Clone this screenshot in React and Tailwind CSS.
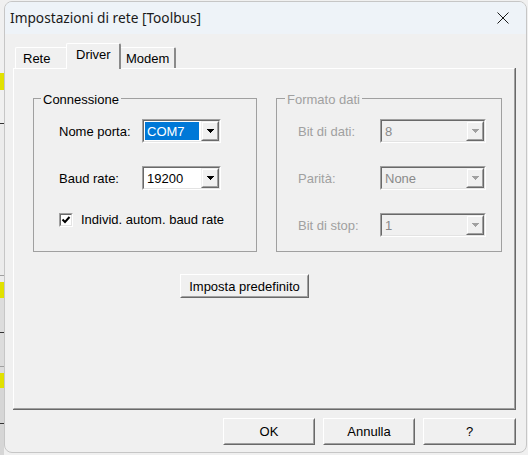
import React from "react";

const Arrow = ({ disabled }) => (
  <svg width="7" height="4" viewBox="0 0 7 4" shapeRendering="crispEdges">
    <polygon points="0,0 7,0 3.5,4" fill={disabled ? "#a0a0a0" : "#000000"} />
  </svg>
);

const DropBtn = ({ disabled }) => (
  <div className="w-[18px] h-full border border-t-[#f0f0f0] border-l-[#f0f0f0] border-r-[#696969] border-b-[#696969]">
    <div className="h-full border border-t-white border-l-white border-r-[#a0a0a0] border-b-[#a0a0a0] bg-[#f0f0f0] flex items-center justify-center">
      <Arrow disabled={disabled} />
    </div>
  </div>
);

const Combo = ({ value, width, selected, disabled }) => (
  <div className={`h-[24px] border border-t-[#a0a0a0] border-l-[#a0a0a0] border-r-white border-b-white ${width}`}>
    <div
      className={`h-full border border-t-[#696969] border-l-[#696969] border-r-[#e3e3e3] border-b-[#e3e3e3] flex ${
        disabled ? "bg-[#f0f0f0]" : "bg-white"
      }`}
    >
      {selected ? (
        <div className="flex-1 mt-[1px] mb-[1px] ml-[1px] mr-[2px] bg-[#0078d7] text-white pl-[2px] flex items-center">
          {value}
        </div>
      ) : (
        <div className={`flex-1 pl-[3px] flex items-center ${disabled ? "text-[#8a8a8a]" : "text-black"}`}>
          {value}
        </div>
      )}
      <DropBtn disabled={disabled} />
    </div>
  </div>
);

const PushButton = ({ children, className }) => (
  <div className={`border border-t-white border-l-white border-r-[#696969] border-b-[#696969] ${className}`}>
    <div className="h-full border border-t-[#f0f0f0] border-l-[#f0f0f0] border-r-[#a0a0a0] border-b-[#a0a0a0] bg-[#f0f0f0] flex items-center justify-center text-black">
      {children}
    </div>
  </div>
);

const Checkbox = () => (
  <div className="w-[14px] h-[14px] border border-t-[#a0a0a0] border-l-[#a0a0a0] border-r-white border-b-white">
    <div className="w-full h-full border border-t-[#696969] border-l-[#696969] border-r-[#e3e3e3] border-b-[#e3e3e3] bg-white flex items-center justify-center">
      <svg width="10" height="10" viewBox="0 0 10 10">
        <path d="M1.5 4.5 L4 7 L8.5 2" stroke="#000" strokeWidth="2" fill="none" />
      </svg>
    </div>
  </div>
);

const Strip = () => (
  <div className="w-[4px] shrink-0 flex flex-col">
    <div className="h-[73px] bg-[#f0f0f0]" />
    <div className="h-[17px] bg-[#e1e100]" />
    <div className="h-[33px] bg-[#f0f0f0]" />
    <div className="h-[1px] bg-[#333333]" />
    <div className="h-[151px] bg-[#ececec]" />
    <div className="h-[1px] bg-[#a0a0a0]" />
    <div className="h-[6px] bg-[#ececec]" />
    <div className="h-[16px] bg-[#e1e100]" />
    <div className="h-[34px] bg-[#dcdcdc]" />
    <div className="h-[1px] bg-[#333333]" />
    <div className="h-[33px] bg-[#dcdcdc]" />
    <div className="h-[1px] bg-[#a0a0a0]" />
    <div className="h-[6px] bg-[#dcdcdc]" />
    <div className="h-[15px] bg-[#e1e100]" />
    <div className="h-[35px] bg-[#d6d6d6]" />
    <div className="h-[1px] bg-[#333333]" />
    <div className="h-[31px] bg-[#d6d6d6]" />
  </div>
);

export default function App() {
  return (
    <div className="w-[528px] h-[455px] bg-[#f0f0f0] flex overflow-hidden [font-family:'Liberation_Sans',Arial,sans-serif] text-[13px] leading-[15px] text-black">
      <Strip />
      <div className="mt-[1px] w-[523px] h-[452px] shrink-0 rounded-[8px] border border-[#c6c6c6] bg-[#f0f0f0] flex flex-col overflow-hidden">
        {/* Title bar */}
        <div className="h-[32px] shrink-0 bg-[#eef3f8] flex items-center pl-[5px]">
          <div className="flex-1 [font-family:'Noto_Sans',sans-serif] text-[13.7px] leading-[18px] text-[#1a1a1a]">
            Impostazioni di rete [Toolbus]
          </div>
          <div className="w-[46px] h-full flex items-center justify-center">
            <svg width="12" height="12" viewBox="0 0 12 12">
              <path d="M0.5 0.5 L11.5 11.5 M11.5 0.5 L0.5 11.5" stroke="#1a1a1a" strokeWidth="1" />
            </svg>
          </div>
        </div>

        {/* Body */}
        <div className="flex-1 flex flex-col pl-[8px] pr-[10px] pt-[9px] pb-[6px]">
          {/* Tabs */}
          <div className="h-[25px] flex items-end pl-[2px]">
            <div className="w-[51px] h-[21px] pl-[7px] pt-[3px] border-t border-l border-white rounded-tl-[2px]">
              Rete
            </div>
            <div className="relative z-10 w-[55px] h-[26px] -mb-[1px] pl-[9px] pt-[3px] bg-[#f0f0f0] border-t border-l border-white border-r-2 border-r-[#8a8a8a] rounded-t-[2px]">
              Driver
            </div>
            <div className="w-[55px] h-[21px] pl-[5px] pt-[3px] border-t border-white border-r-2 border-r-[#8a8a8a] rounded-tr-[2px]">
              Modem
            </div>
          </div>

          {/* Panel */}
          <div className="h-[342px] border-r border-b border-[#696969]">
            <div className="h-full border border-t-white border-l-white border-r-[#a0a0a0] border-b-[#a0a0a0] flex flex-col pl-[19px] pt-[29px]">
              <div className="flex gap-[19px]">
                {/* Connessione */}
                <div className="w-[224px] h-[154px] border border-[#a0a0a0] flex flex-col">
                  <div className="-mt-[7px] ml-[7px] w-fit px-[2px] bg-[#f0f0f0] h-[15px]">Connessione</div>
                  <div className="mt-[12px] pl-[25px] flex flex-col gap-[23px]">
                    <div className="flex items-center">
                      <div className="w-[83px]">Nome porta:</div>
                      <Combo value="COM7" width="w-[79px]" selected />
                    </div>
                    <div className="flex items-center">
                      <div className="w-[83px]">Baud rate:</div>
                      <Combo value="19200" width="w-[79px]" />
                    </div>
                  </div>
                  <div className="mt-[22px] pl-[25px] flex items-center">
                    <Checkbox />
                    <div className="ml-[8px]">Individ. autom. baud rate</div>
                  </div>
                </div>

                {/* Formato dati */}
                <div className="w-[226px] h-[154px] border border-[#a0a0a0] flex flex-col">
                  <div className="-mt-[7px] ml-[8px] w-fit px-[2px] bg-[#f0f0f0] h-[15px] text-[#a0a0a0]">Formato dati</div>
                  <div className="mt-[12px] pl-[21px] flex flex-col gap-[23px]">
                    <div className="flex items-center">
                      <div className="w-[82px] text-[#a0a0a0]">Bit di dati:</div>
                      <Combo value="8" width="w-[106px]" disabled />
                    </div>
                    <div className="flex items-center">
                      <div className="w-[82px] text-[#a0a0a0]">Parità:</div>
                      <Combo value="None" width="w-[106px]" disabled />
                    </div>
                    <div className="flex items-center">
                      <div className="w-[82px] text-[#a0a0a0]">Bit di stop:</div>
                      <Combo value="1" width="w-[106px]" disabled />
                    </div>
                  </div>
                </div>
              </div>

              <PushButton className="mt-[22px] ml-[147px] w-[129px] h-[24px]">Imposta predefinito</PushButton>
            </div>
          </div>

          {/* Bottom buttons */}
          <div className="mt-[8px] flex justify-end gap-[8px]">
            <PushButton className="w-[92px] h-[27px]">OK</PushButton>
            <PushButton className="w-[92px] h-[27px]">Annulla</PushButton>
            <PushButton className="w-[93px] h-[27px]">?</PushButton>
          </div>
        </div>
      </div>
    </div>
  );
}
